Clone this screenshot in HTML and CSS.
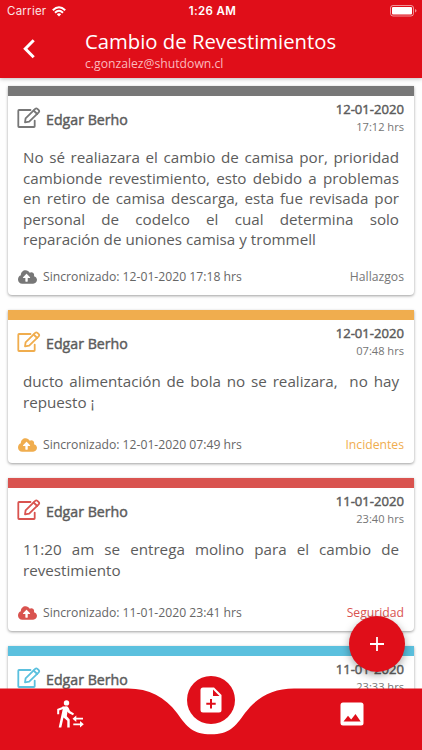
FILE: index.html
```html
<!DOCTYPE html>
<html lang="es">
<head>
<meta charset="utf-8">
<title>Cambio de Revestimientos</title>
<link rel="stylesheet" href="styles.css">
</head>
<body>
<svg class="defs" width="0" height="0" aria-hidden="true">
  <symbol id="edit" viewBox="0 0 24 22">
    <g fill="none" stroke="currentColor" stroke-width="1.800" stroke-linejoin="round" stroke-linecap="round">
      <path d="M13.500 3H2Q1.300 3 1.300 3.700V19.300Q1.300 20 2 20H17Q17.700 20 17.700 19.300V13.600"/>
      <path d="M8 15.400L8.600 11.300L18.200 1.900Q19.300.9 20.400 1.900L21.700 3.200Q22.700 4.300 21.700 5.300L12.200 14.600Z"/>
      <path d="M16.600 3.500L20.200 7"/>
    </g>
  </symbol>
  <symbol id="cloud" viewBox="0 0 640 448">
    <path fill="currentColor" d="M537.600 194.600C541.700 183.900 544 172.200 544 160C544 107 501 64 448 64C428.300 64 409.900 70 394.700 80.200C367 32.200 315.300 0 256 0C167.600 0 96 71.600 96 160C96 162.700 96.100 165.400 96.200 168.100C40.200 187.800 0 241.200 0 304C0 383.500 64.500 448 144 448H512C582.700 448 640 390.700 640 320C640 258.100 596 206.400 537.600 194.600ZM393.400 256H328V368C328 376.800 320.800 384 312 384H264C255.200 384 248 376.800 248 368V256H182.600C168.300 256 161.200 238.800 171.300 228.700L276.700 123.300C282.900 117.100 293.100 117.100 299.300 123.300L404.700 228.700C414.800 238.800 407.600 256 393.400 256Z"/>
  </symbol>
</svg>
<div class="app">
  <header class="header">
    <div class="status">
      <span class="carrier">Carrier
        <svg width="14" height="11" viewBox="0 0 14 11"><g fill="none" stroke="#fff" stroke-width="2"><path d="M.8 4.200Q7-1.800 13.200 4.200"/><path d="M3 6.700Q7 2.900 11 6.700"/></g><path fill="#fff" d="M4.800 8.200Q7 6.300 9.200 8.200L7 10.500Z"/></svg>
      </span>
      <span class="clock">1:26 AM</span>
      <svg class="battery" width="27" height="12" viewBox="0 0 27 12"><rect x=".5" y=".5" width="23" height="10.500" rx="2.500" fill="none" stroke="#fff" stroke-opacity=".55"/><rect x="2" y="2" width="20" height="7.500" rx="1" fill="#fff"/><path fill="#fff" fill-opacity=".55" d="M25 4Q26.500 4.500 26.500 5.800T25 7.600Z"/></svg>
    </div>
    <div class="titlebar">
      <svg class="back" width="14" height="20" viewBox="0 0 14 20"><path d="M11.700 1.300L3.300 9.800L11.700 18.300" fill="none" stroke="#fff" stroke-width="3"/></svg>
      <div>
        <h1 class="title">Cambio de Revestimientos</h1>
        <p class="email">c.gonzalez@shutdown.cl</p>
      </div>
    </div>
  </header>

  <main class="list">
    <article class="card gray">
      <div class="head">
        <svg class="edit" width="24" height="22"><use href="#edit"/></svg>
        <span class="name">Edgar Berho</span>
        <div class="when"><div class="date">12-01-2020</div><div class="time">17:12 hrs</div></div>
      </div>
      <p class="text">No sé realiazara el cambio de camisa por, prioridad cambionde revestimiento, esto debido a problemas en retiro de camisa descarga, esta fue revisada por personal de codelco el cual determina solo reparación de uniones camisa y trommell</p>
      <div class="foot"><svg class="cloud" width="19" height="14"><use href="#cloud"/></svg><span class="sync">Sincronizado: 12-01-2020 17:18 hrs</span><span class="tag">Hallazgos</span></div>
    </article>
    <article class="card orange">
      <div class="head">
        <svg class="edit" width="24" height="22"><use href="#edit"/></svg>
        <span class="name">Edgar Berho</span>
        <div class="when"><div class="date">12-01-2020</div><div class="time">07:48 hrs</div></div>
      </div>
      <p class="text">ducto alimentación de bola no se realizara, &nbsp;no hay repuesto ¡</p>
      <div class="foot"><svg class="cloud" width="19" height="14"><use href="#cloud"/></svg><span class="sync">Sincronizado: 12-01-2020 07:49 hrs</span><span class="tag">Incidentes</span></div>
    </article>
    <article class="card red">
      <div class="head">
        <svg class="edit" width="24" height="22"><use href="#edit"/></svg>
        <span class="name">Edgar Berho</span>
        <div class="when"><div class="date">11-01-2020</div><div class="time">23:40 hrs</div></div>
      </div>
      <p class="text">11:20 am se entrega molino para el cambio de revestimiento</p>
      <div class="foot"><svg class="cloud" width="19" height="14"><use href="#cloud"/></svg><span class="sync">Sincronizado: 11-01-2020 23:41 hrs</span><span class="tag">Seguridad</span></div>
    </article>
    <article class="card blue">
      <div class="head">
        <svg class="edit" width="24" height="22"><use href="#edit"/></svg>
        <span class="name">Edgar Berho</span>
        <div class="when"><div class="date">11-01-2020</div><div class="time">23:33 hrs</div></div>
      </div>
    </article>
  </main>

  <div class="fab"><svg width="16" height="16" viewBox="0 0 16 16"><path d="M8 1V15M1 8H15" stroke="#fff" stroke-width="1.800"/></svg></div>

  <nav class="nav">
    <svg class="wave" width="422" height="62" viewBox="0 0 422 62"><path fill="#e00e19" d="M0 .5H128C149 .5 165 9 177 25C187 39 193 46.300 211 46.300C229 46.300 235 39 245 25C257 9 273 .5 294 .5H422V62H0Z"/></svg>
    <div class="tabs">
      <svg width="28" height="28" viewBox="0 0 28 28">
        <circle cx="10.500" cy="2.900" r="2.700" fill="#fff"/>
        <path fill="none" stroke="#fff" stroke-width="2" d="M2.200 14.300V9.800L8 7.500"/>
        <path fill="#fff" d="M6 6.800L10.500 6.300Q12 6.400 12.700 8L14 11L18 13.500L17 15.300L12.500 12.900L11.500 11.500L10.800 16.300L13.700 19.500V27.500H11.300V20.700L7.500 17.500L5.300 27.500H2.700L6.700 9.300Z"/>
        <path fill="none" stroke="#fff" stroke-width="1.700" d="M18.500 18.700H27M17.300 24.300H25.500"/>
        <path fill="#fff" d="M20.300 15.500V21.900L16.500 18.700ZM24 21.100V27.500L27.800 24.300Z"/>
      </svg>
      <div class="add"><svg width="22" height="26" viewBox="0 0 22 26"><path fill="#fff" d="M3 .5H14L21.500 8V23Q21.500 25.500 19 25.500H3Q.5 25.500 .5 23V3Q.5 .5 3 .5Z"/><path fill="#e00e19" d="M13 2.500V9H19.500ZM10 12H12V15.700H15.700V17.700H12V21.500H10V17.700H6.300V15.700H10Z"/></svg></div>
      <svg width="24" height="24" viewBox="0 0 24 24"><rect x=".5" y=".5" width="23" height="23" rx="2.500" fill="#fff"/><path fill="#e00e19" d="M3.500 19.500L8 13.800L11.200 17.500L15.500 12L20.700 19.500Z"/></svg>
    </div>
  </nav>
</div>
</body>
</html>
```
FILE: styles.css
```css
* { box-sizing: border-box; margin: 0; }
body { background: #fefefe; font-family: "Open Sans", sans-serif; color: #5c5c5c; }
.defs { position: absolute; }
.app { position: relative; height: 750px; overflow: hidden; }

.header { height: 78px; background: #e00e19; color: #fff; box-shadow: 0 1px 4px rgba(0,0,0,.25); }
.status { height: 22px; padding: 0 5px 0 7px; display: grid; grid-template-columns: 1fr auto 1fr; align-items: center; font-family: Inter, sans-serif; font-size: 11.5px; line-height: 22px; }
.carrier { display: flex; align-items: center; gap: 6px; color: #fbe3e5; letter-spacing: .25px; }
.clock { font-weight: 600; letter-spacing: .4px; padding-left: 1px; }
.battery { justify-self: end; }
.titlebar { display: flex; padding-left: 22px; }
.back { margin: 17px 49px 0 0; }
.title { font-size: 20.3px; font-weight: 400; line-height: 27px; padding-top: 6px; white-space: nowrap; }
.email { font-size: 12.200px; line-height: 16px; padding-top: 1px; color: #fbb9bd; }

.list { padding: 8px 8px 0; display: flex; flex-direction: column; gap: 15px; }
.card { height: 153px; border-top: 10px solid var(--accent); background: #fff; border-radius: 0 0 4px 4px; box-shadow: 0 1px 3px rgba(0,0,0,.38); display: flex; flex-direction: column; flex: none; }
.gray { --accent: #777; height: 209px; }
.orange { --accent: #f0ad4e; }
.red { --accent: #d9534f; }
.blue { --accent: #5bc0de; }
.head { display: flex; padding: 3px 10px 0 9px; height: 51px; }
.edit { margin: 8px 5px 0 0; color: var(--accent); }
.name { font-size: 14.200px; line-height: 20px; padding-top: 11px; -webkit-text-stroke: .45px currentColor; }
.when { margin-left: auto; text-align: right; }
.date { font-size: 13.100px; line-height: 20px; -webkit-text-stroke: .45px currentColor; }
.time { font-size: 11.100px; line-height: 15px; color: #757575; }
.text { margin: 0 15px; font-size: 15.200px; line-height: 20.500px; text-align: justify; }
.foot { margin-top: auto; height: 37px; padding: 0 10px; display: flex; align-items: center; font-size: 12.200px; color: #666; }
.cloud { color: var(--accent); margin-right: 6px; }
.tag { margin-left: auto; color: var(--accent); }

.fab { position: absolute; left: 349px; top: 616px; width: 56px; height: 56px; border-radius: 50%; background: #e00e19; display: grid; place-items: center; box-shadow: 0 3px 8px rgba(0,0,0,.35); z-index: 3; }
.nav { position: absolute; left: 0; bottom: 0; width: 422px; height: 62px; z-index: 2; }
.wave { display: block; position: absolute; left: 0; top: 0; }
.tabs { position: relative; display: grid; grid-template-columns: 1fr 1fr 1fr; align-items: center; justify-items: center; height: 52px; }
.add { width: 48px; height: 48px; border-radius: 50%; background: #e00e19; display: grid; place-items: center; margin-top: -28px; }
```
